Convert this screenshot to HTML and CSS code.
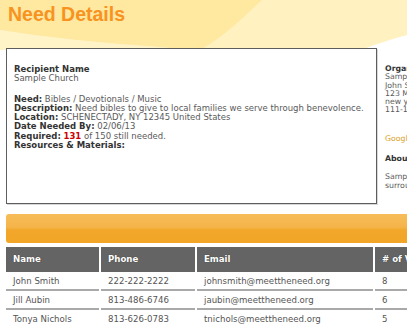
FILE: index.html
```html
<!DOCTYPE html>
<html>
<head>
<meta charset="utf-8">
<link rel="stylesheet" href="styles.css">
</head>
<body>
<div class="page">
  <header class="header">
    <svg class="header-bg" width="600" height="60" viewBox="0 0 600 60" preserveAspectRatio="none">
      <rect x="0" y="0" width="600" height="60" fill="#fff1c0"/>
      <path d="M0 0 L262 0 C240 20 225 36 200 50 C140 46 60 40 0 30 Z" fill="#ffe8a0"/>
      <path d="M0 30 C60 40 140 46 200 50 L0 50 Z" fill="#fff3c8"/>
      <path d="M407 35 C390 40 375 44 362 50 L600 50 L600 30 Z" fill="#ffffff"/>
      <rect x="0" y="50" width="600" height="10" fill="#ffffff"/>
    </svg>
    <h1 class="title">Need Details</h1>
  </header>

  <div class="main">
    <div class="box">
      <p class="block">
        <b>Recipient Name</b><br>
        Sample Church
      </p>
      <p class="block">
        <b>Need:</b> Bibles / Devotionals / Music<br>
        <b>Description:</b> Need bibles to give to local families we serve through benevolence.<br>
        <b>Location:</b> SCHENECTADY, NY 12345 United States<br>
        <b>Date Needed By:</b> 02/06/13<br>
        <b>Required:</b> <b class="red">131</b> of 150 still needed.<br>
        <b>Resources &amp; Materials:</b>
      </p>
    </div>
    <div class="side">
      <p class="sblock s-org">
        <b>Organization</b><br>
        Sample Church<br>
        John Smith<br>
        123 Main Street<br>
        new york, NY 12345<br>
        111-111-1111
      </p>
      <p class="sblock s-map"><a class="link" href="#">Google Map</a></p>
      <p class="sblock s-about"><b>About Us</b></p>
      <p class="sblock">
        Sample church serving the<br>
        surrounding community.
      </p>
    </div>
  </div>

  <div class="bar"></div>

  <table class="grid">
    <thead>
      <tr>
        <th class="c1">Name</th>
        <th class="c2">Phone</th>
        <th class="c3">Email</th>
        <th class="c4"># of Volunteers</th>
      </tr>
    </thead>
    <tbody>
      <tr><td>John Smith</td><td>222-222-2222</td><td>johnsmith@meettheneed.org</td><td>8</td></tr>
      <tr><td>Jill Aubin</td><td>813-486-6746</td><td>jaubin@meettheneed.org</td><td>6</td></tr>
      <tr><td>Tonya Nichols</td><td>813-626-0783</td><td>tnichols@meettheneed.org</td><td>5</td></tr>
    </tbody>
  </table>
</div>
</body>
</html>
```
FILE: styles.css
```css
html, body {
  margin: 0;
  padding: 0;
  overflow: hidden;
  background: #ffffff;
}
.page {
  width: 560px;
  font-family: "DejaVu Sans", Verdana, sans-serif;
  font-size: 8.5px;
  line-height: 9.3px;
  color: #5a5a5a;
}
.header {
  position: relative;
  height: 48px;
}
.header-bg {
  position: absolute;
  left: 0;
  top: 0;
  width: 600px;
  height: 60px;
  z-index: 0;
}
.title {
  position: relative;
  z-index: 1;
  margin: 0;
  padding: 3px 0 0 8px;
  font-family: "Liberation Sans", Arial, sans-serif;
  font-weight: bold;
  font-size: 19.5px;
  line-height: 22px;
  color: #f7931e;
}
.main {
  position: relative;
  z-index: 1;
  display: flex;
  align-items: flex-start;
  gap: 8px;
  padding-left: 6px;
}
.box {
  box-sizing: border-box;
  width: 371px;
  height: 156px;
  background: #ffffff;
  border: 1px solid #5e5e5e;
  box-shadow: 1px 1px 0 #d8d8d8;
  padding: 16px 7px 0 7px;
}
.block {
  margin: 0 0 11px 0;
}
b {
  color: #333333;
}
.red {
  color: #cc0000 !important;
}
.side {
  width: 160px;
  padding-top: 17px;
  font-size: 7.8px;
  line-height: 8.3px;
}
.sblock {
  margin: 0 0 10px 0;
}
.s-org {
  margin-bottom: 20px;
}
.s-map {
  margin-bottom: 12px;
}
.link {
  color: #d9a22a;
  text-decoration: none;
}
.bar {
  margin: 10px 0 0 6px;
  height: 29px;
  border-radius: 3px 0 0 3px;
  background: linear-gradient(#f7bd59 0%, #f5b44a 45%, #f2a72b 55%, #f2a526 100%);
}
.grid {
  margin: 2px 0 0 4px;
  border-collapse: separate;
  border-spacing: 2px;
  font-size: 8.6px;
  color: #555555;
}
.grid th {
  background: #646464;
  color: #ffffff;
  font-weight: bold;
  text-align: left;
  height: 25px;
  padding: 0 0 0 7px;
  text-shadow: 0 0 1px #333;
  box-sizing: border-box;
}
.grid td {
  height: 17px;
  padding: 0 0 0 7px;
  border-bottom: 2px solid #a9a9a9;
  box-sizing: border-box;
  white-space: nowrap;
}
.c1 { width: 93px; }
.c2 { width: 94px; }
.c3 { width: 176px; }
.c4 { width: 120px; }
```
